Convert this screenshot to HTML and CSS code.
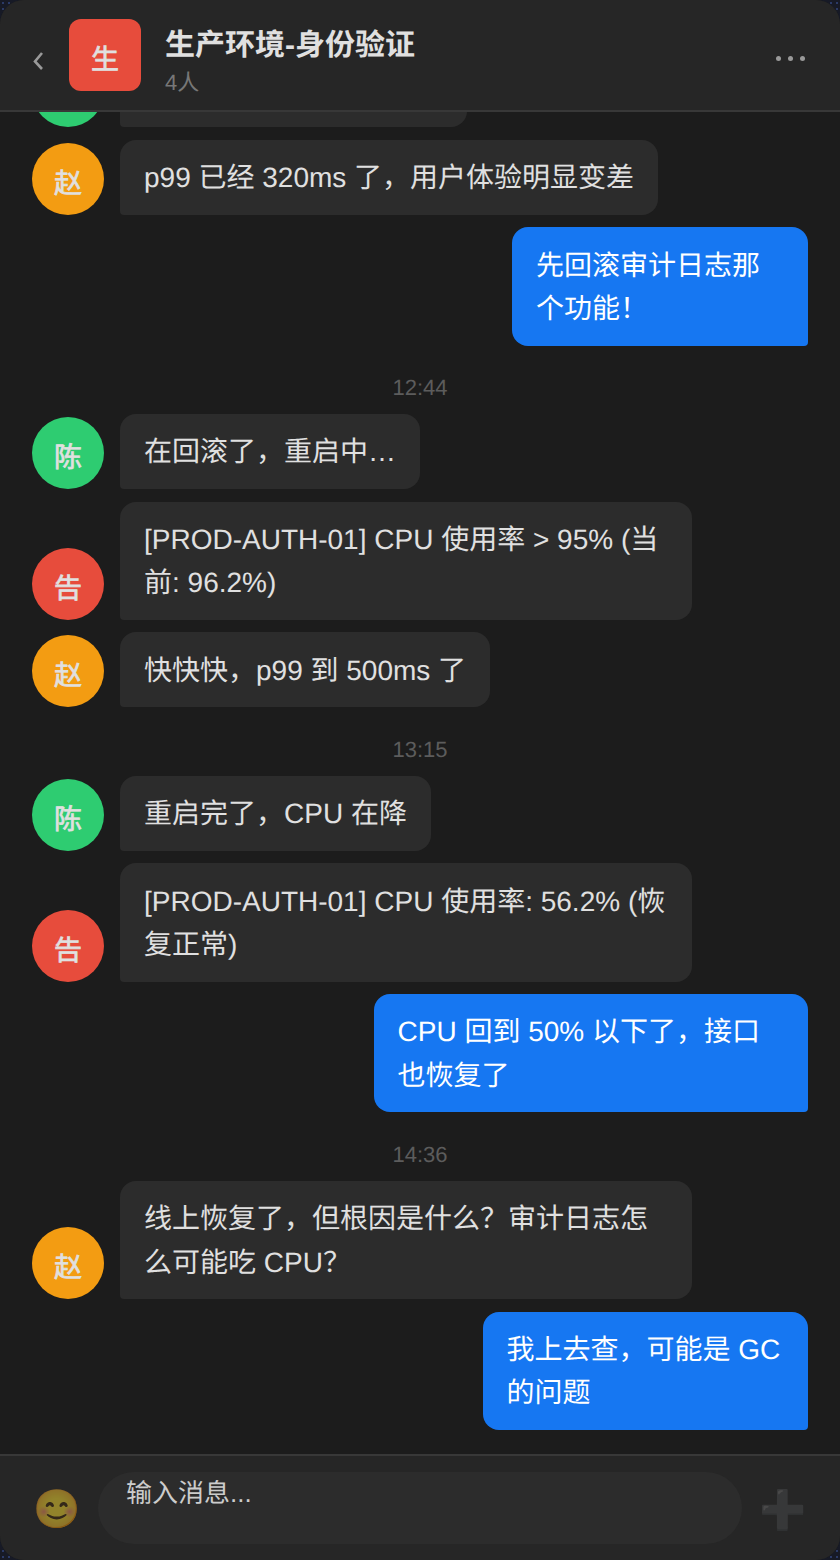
FILE: index.html
```html
<!DOCTYPE html>
<html lang="zh-CN">

<head>
    <meta charset="UTF-8">
    <meta name="viewport" content="width=device-width, initial-scale=1.0">
    <title>生产环境-身份验证</title>
    <link rel="stylesheet" href="styles.css">
</head>

<body>
    <div class="phone">
        <header class="top">
            <svg class="back" width="12" height="20" viewBox="0 0 12 20">
                <path d="M10 2 L3 10.5 L10 18" fill="none" stroke="#999999" stroke-width="2.6" />
            </svg>
            <div class="group-pic">生</div>
            <div class="group-info">
                <div class="group-name">生产环境-身份验证</div>
                <div class="group-count">4人</div>
            </div>
            <div class="more"><i></i><i></i><i></i></div>
        </header>

        <main class="chat">
            <div class="chat-inner">
                <!-- scrolled away under the header, only the bottom edge shows -->
                <div class="msg">
                    <div class="avatar green"></div>
                    <div class="bubble cut"></div>
                </div>
                <div class="msg">
                    <div class="avatar orange">赵</div>
                    <div class="bubble">p99 已经 320ms 了，用户体验明显变差</div>
                </div>
                <div class="msg mine">
                    <div class="bubble wrap-s">先回滚审计日志那个功能！</div>
                </div>

                <div class="time">12:44</div>
                <div class="msg">
                    <div class="avatar green">陈</div>
                    <div class="bubble">在回滚了，重启中…</div>
                </div>
                <div class="msg">
                    <div class="avatar red">告</div>
                    <div class="bubble">[PROD-AUTH-01] CPU 使用率 &gt; 95% (当前: 96.2%)</div>
                </div>
                <div class="msg">
                    <div class="avatar orange">赵</div>
                    <div class="bubble">快快快，p99 到 500ms 了</div>
                </div>

                <div class="time">13:15</div>
                <div class="msg">
                    <div class="avatar green">陈</div>
                    <div class="bubble">重启完了，CPU 在降</div>
                </div>
                <div class="msg">
                    <div class="avatar red">告</div>
                    <div class="bubble">[PROD-AUTH-01] CPU 使用率: 56.2% (恢复正常)</div>
                </div>
                <div class="msg mine">
                    <div class="bubble wrap-l">CPU 回到 50% 以下了，接口也恢复了</div>
                </div>

                <div class="time">14:36</div>
                <div class="msg">
                    <div class="avatar orange">赵</div>
                    <div class="bubble">线上恢复了，但根因是什么？审计日志怎么可能吃 CPU？</div>
                </div>
                <div class="msg mine">
                    <div class="bubble wrap-m">我上去查，可能是 GC 的问题</div>
                </div>
            </div>
        </main>

        <footer class="bottom">
            <span class="emoji">😊</span>
            <div class="input">输入消息...</div>
            <span class="plus">➕</span>
        </footer>
    </div>
</body>

</html>
```

FILE: styles.css
```css
* {
    box-sizing: border-box;
}

body {
    margin: 0;
    width: 840px;
    height: 1560px;
    overflow: hidden;
    background-color: #171a26;
    background-image: radial-gradient(#2b3a66 1px, transparent 1px);
    background-size: 6px 6px;
    font-family: "Liberation Sans", "Noto Sans CJK SC", sans-serif;
    text-rendering: geometricPrecision;
}

.phone {
    width: 840px;
    height: 1560px;
    border-radius: 24px;
    overflow: hidden;
    display: flex;
    flex-direction: column;
    background-color: #1c1c1c;
}

.top {
    position: relative;
    z-index: 1;
    height: 112px;
    flex-shrink: 0;
    display: flex;
    align-items: center;
    padding: 0 35px 0 32px;
    background-color: #262626;
    border-bottom: 2px solid #383838;
}

.back {
    flex-shrink: 0;
    margin: 11px 25px 0 0;
}

.group-pic {
    width: 72px;
    height: 72px;
    border-radius: 12px;
    background-color: #e74c3c;
    color: #e0e0e0;
    font-size: 28px;
    -webkit-text-stroke: 0.7px #e0e0e0;
    padding-top: 6px;
    display: flex;
    align-items: center;
    justify-content: center;
    margin-right: 24px;
}

.group-info {
    padding-top: 10px;
}

.group-name {
    font-size: 30px;
    font-weight: bold;
    line-height: 45px;
    color: #e0e0e0;
}

.group-count {
    font-size: 22px;
    line-height: 30px;
    color: #777777;
}

.more {
    margin-left: auto;
    margin-top: 7px;
    display: flex;
    gap: 7px;
}

.more i {
    width: 5px;
    height: 5px;
    border-radius: 50%;
    background-color: #999999;
}

.chat {
    flex: 1;
    min-height: 0;
    overflow: hidden;
    display: flex;
    flex-direction: column;
    justify-content: flex-end;
    padding: 0 32px 24px;
}

.chat-inner {
    display: flex;
    flex-direction: column;
    gap: 12.5px;
}

.msg {
    display: flex;
    align-items: flex-end;
    gap: 16px;
}

.msg.mine {
    justify-content: flex-end;
}

.avatar {
    width: 72px;
    height: 72px;
    flex-shrink: 0;
    border-radius: 50%;
    color: #e0e0e0;
    font-size: 28px;
    -webkit-text-stroke: 0.7px #e0e0e0;
    padding-top: 6px;
    display: flex;
    align-items: center;
    justify-content: center;
}

.green {
    background-color: #2ecc71;
}

.orange {
    background-color: #f39c12;
}

.red {
    background-color: #e74c3c;
}

.bubble {
    max-width: 571.5px;
    padding: 16.4px 24px 15.2px;
    border-radius: 16px 16px 16px 4px;
    background-color: #2c2c2c;
    color: #e0e0e0;
    font-size: 28px;
    line-height: 43.4px;
}

.bubble.cut {
    width: 347px;
    height: 75px;
}

.mine .bubble {
    border-radius: 16px 16px 4px 16px;
    background-color: #1677f2;
    color: #ffffff;
}

.mine .wrap-s {
    width: 296px;
}

.mine .wrap-m {
    width: 325.5px;
}

.mine .wrap-l {
    width: 434.5px;
}

.time {
    margin-top: 17.2px;
    text-align: center;
    font-size: 22px;
    line-height: 26.1px;
    color: #5c5c5c;
}

.bottom {
    height: 106px;
    flex-shrink: 0;
    display: flex;
    align-items: center;
    padding: 0 32px;
    gap: 16px;
    background-color: #262626;
    border-top: 2px solid #383838;
}

.emoji {
    width: 50px;
    padding-top: 3px;
    font-size: 38px;
    opacity: 0.5;
    text-align: center;
}

.input {
    flex: 1;
    height: 72px;
    border-radius: 36px;
    padding: 0 28px;
    background-color: #2c2c2c;
    color: #cccccc;
    font-size: 26px;
    line-height: 42px;
}

.plus {
    width: 50px;
    padding-top: 6px;
    font-size: 38px;
    opacity: 0.3;
    text-align: center;
}
```
